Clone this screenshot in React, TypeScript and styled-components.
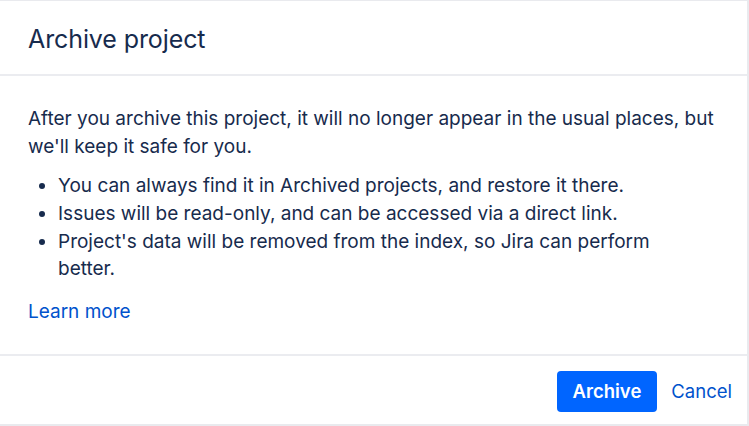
import React from "react";
import styled, { createGlobalStyle } from "styled-components";

const GlobalStyle = createGlobalStyle`
    html, body {
        margin: 0;
        padding: 0;
        background: #ffffff;
    }
    * {
        box-sizing: border-box;
    }
`;

const Dialog = styled.section`
    width: 749px;
    height: 426px;
    display: flex;
    flex-direction: column;
    background: #ffffff;
    border-top: 1px solid #e9eaee;
    border-right: 2px solid #e9eaee;
    border-bottom: 2px solid #e9eaee;
    font-family: Inter, "Liberation Sans", sans-serif;
    color: #172b4d;
`;

const Header = styled.header`
    height: 75px;
    display: flex;
    align-items: center;
    padding: 2px 28px 0;
    border-bottom: 2px solid #ebecf0;
`;

const Title = styled.h1`
    margin: 0;
    font-size: 25px;
    font-weight: 400;
    letter-spacing: -0.1px;
    color: #172b4d;
`;

const Body = styled.div`
    flex: 1;
    padding: 29px 28px 0;
    border-bottom: 2px solid #ebecf0;
`;

const Paragraph = styled.p`
    margin: 0;
    font-size: 19px;
    line-height: 27.5px;
`;

const List = styled.ul`
    margin: 12px 24px 0 0;
    padding-left: 30px;
    font-size: 19px;
    line-height: 27.8px;
`;

const Item = styled.li`
    padding-left: 0;
`;

const TextLink = styled.a`
    display: inline-block;
    margin-top: 15px;
    font-size: 19px;
    line-height: 28px;
    color: #0052cc;
    text-decoration: none;
    cursor: pointer;
`;

const Footer = styled.footer`
    height: 68px;
    display: flex;
    align-items: center;
    justify-content: flex-end;
    gap: 13px;
    padding: 2px 14px 0 28px;
`;

const Button = styled.button<{ $primary?: boolean }>`
    height: 41px;
    padding: 0 ${(p) => (p.$primary ? "16px" : "1px")};
    border: none;
    border-radius: 4px;
    font-family: Inter, "Liberation Sans", sans-serif;
    font-size: 18.5px;
    font-weight: ${(p) => (p.$primary ? 600 : 400)};
    background: ${(p) => (p.$primary ? "#0065ff" : "transparent")};
    color: ${(p) => (p.$primary ? "#ffffff" : "#0052cc")};
    cursor: pointer;
`;

export default function App() {
    return (
        <>
            <GlobalStyle />
            <Dialog>
                <Header>
                    <Title>Archive project</Title>
                </Header>
                <Body>
                    <Paragraph>
                        After you archive this project, it will no longer appear in the usual places, but
                        we'll keep it safe for you.
                    </Paragraph>
                    <List>
                        <Item>You can always find it in Archived projects, and restore it there.</Item>
                        <Item>Issues will be read-only, and can be accessed via a direct link.</Item>
                        <Item>Project's data will be removed from the index, so Jira can perform better.</Item>
                    </List>
                    <TextLink>Learn more</TextLink>
                </Body>
                <Footer>
                    <Button $primary>Archive</Button>
                    <Button>Cancel</Button>
                </Footer>
            </Dialog>
        </>
    );
}
